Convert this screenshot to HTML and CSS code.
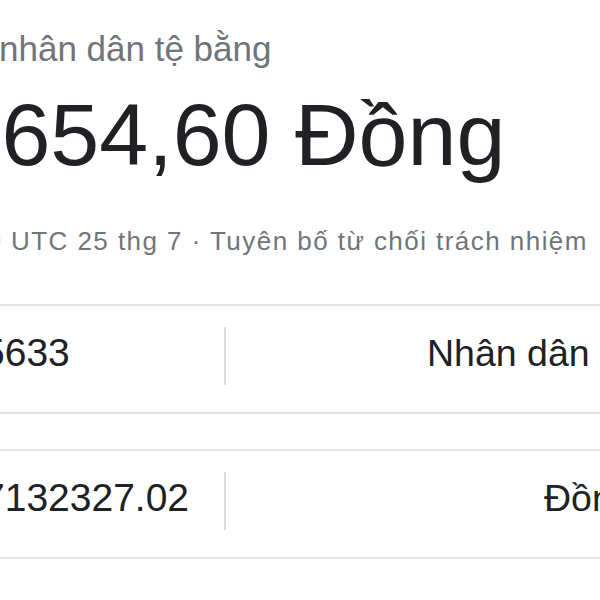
FILE: index.html
```html
<!DOCTYPE html>
<html lang="vi">

<head>
    <meta charset="UTF-8" />
    <meta name="viewport" content="width=device-width, initial-scale=1.0" />
    <title>Chuyển đổi tiền tệ</title>
    <link rel="stylesheet" href="styles.css">
</head>

<body>
    <div class="converter">
        <div class="result">
            <div class="query">nhân dân tệ bằng</div>
            <div class="amount">3.654,60 Đồng</div>
            <div class="meta">09:10 UTC 25 thg 7 · Tuyên bố từ chối trách nhiệm</div>
        </div>

        <div class="field">
            <div class="value">5633</div>
            <div class="divider"></div>
            <div class="unit unit-cny">Nhân dân tệ Trung Quốc</div>
        </div>

        <div class="field">
            <div class="value">7132327.02</div>
            <div class="divider"></div>
            <div class="unit unit-vnd">Đồng Việt Nam</div>
        </div>
    </div>
</body>

</html>
```

FILE: styles.css
```css
html,
body {
    overflow: hidden;
}

body {
    margin: 0;
    background-color: #fff;
    font-family: "Liberation Sans", Arial, sans-serif;
}

.converter {
    width: 600px;
}

.result {
    padding-top: 29px;
    white-space: nowrap;
}

.query {
    margin-left: -1px;
    font-size: 35px;
    line-height: 40px;
    color: #70757a;
}

.amount {
    margin-top: 16px;
    margin-left: -72px;
    font-size: 88px;
    line-height: 100px;
    color: #202124;
}

.meta {
    margin-top: 41px;
    margin-left: -70px;
    font-size: 26px;
    line-height: 30px;
    color: #70757a;
    letter-spacing: 1.45px;
}

.field {
    display: flex;
    align-items: flex-start;
    margin-top: 48px;
    padding: 21px 0 27px;
    border-top: 2px solid #e4e4e4;
    border-bottom: 2px solid #e4e4e4;
    white-space: nowrap;
    overflow: hidden;
}

.field + .field {
    margin-top: 35px;
}

.value {
    flex: none;
    width: 241px;
    margin-left: -17px;
    font-size: 39px;
    line-height: 52px;
    color: #202124;
}

.divider {
    flex: none;
    width: 2px;
    height: 58px;
    background-color: #dcdcdc;
}

.unit {
    font-size: 37.5px;
    line-height: 52px;
    color: #202124;
}

.unit-cny {
    padding-left: 201px;
}

.unit-vnd {
    padding-left: 318px;
}
```
